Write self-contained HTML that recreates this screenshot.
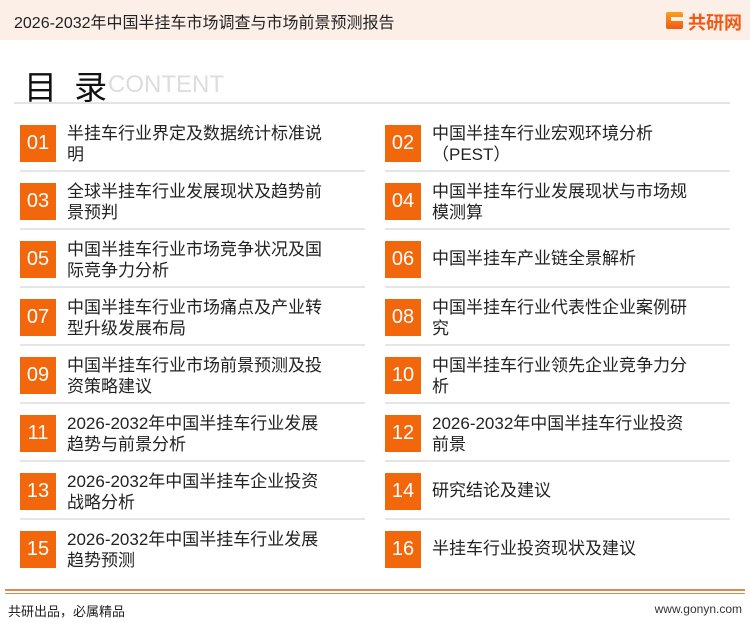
<!DOCTYPE html>
<html><head><meta charset="utf-8"><style>
*{margin:0;padding:0;box-sizing:border-box}
body{width:750px;height:622px;background:#fff;position:relative;overflow:hidden;font-family:"Liberation Sans","Noto Sans CJK SC",sans-serif;color:#222}
.hd{position:absolute;left:0;top:0;width:750px;height:40px;background:#fcefe8}
.ht{position:absolute;left:14px;top:9px;font-size:16px;color:#222}
.logo{position:absolute;left:688px;top:9px;font-size:18px;font-weight:bold;color:#f05a14}
.gi{position:absolute;left:666px;top:12px;width:17px;height:17px;background:linear-gradient(#f7a01e,#f05a14);border-radius:2px}
.gi:after{content:"";position:absolute;left:5px;top:5px;width:12px;height:4px;background:#fcefe8}
.mt{position:absolute;left:24px;top:61px;font-size:33px;color:#111;white-space:nowrap;letter-spacing:4px}
.ct{position:absolute;left:108px;top:71px;font-size:24px;color:#ddd}
.rule{position:absolute;left:14px;top:102px;width:716px;height:2px;background:#e4e4e4}
.it{position:absolute;width:345px;height:46px}
.b{position:absolute;left:0;top:0;width:36px;height:37px;background:#f2660c;color:#fff;font-size:20px;text-align:center;line-height:37px}
.t{position:absolute;left:47px;top:-2px;font-size:17px;line-height:21px;color:#222;white-space:nowrap}
.t1{top:7px}
.ln{position:absolute;width:345px;height:2px;background:#e6e6e6}
.f1{position:absolute;left:5px;top:589px;width:740px;height:2px;background:#d98a55}
.f2{position:absolute;left:5px;top:593px;width:740px;height:1px;background:#d98a55}
.ft{position:absolute;left:8px;top:601px;font-size:13px;color:#222}
.fr{position:absolute;right:8px;top:602px;font-size:12px;color:#333}
</style></head><body>
<div class="hd"></div>
<div class="ht">2026-2032年中国半挂车市场调查与市场前景预测报告</div>
<div class="gi"></div><div class="logo">共研网</div>
<div class="mt">目 录</div><div class="ct">CONTENT</div>
<div class="rule"></div>

<div class="it" style="left:20px;top:125px"><div class="b">01</div><div class="t">半挂车行业界定及数据统计标准说<br>明</div></div>
<div class="it" style="left:385px;top:125px"><div class="b">02</div><div class="t">中国半挂车行业宏观环境分析<br>（PEST）</div></div>
<div class="ln" style="left:20px;top:170px"></div><div class="ln" style="left:385px;top:170px"></div>

<div class="it" style="left:20px;top:183px"><div class="b">03</div><div class="t">全球半挂车行业发展现状及趋势前<br>景预判</div></div>
<div class="it" style="left:385px;top:183px"><div class="b">04</div><div class="t">中国半挂车行业发展现状与市场规<br>模测算</div></div>
<div class="ln" style="left:20px;top:228px"></div><div class="ln" style="left:385px;top:228px"></div>

<div class="it" style="left:20px;top:241px"><div class="b">05</div><div class="t">中国半挂车行业市场竞争状况及国<br>际竞争力分析</div></div>
<div class="it" style="left:385px;top:241px"><div class="b">06</div><div class="t t1">中国半挂车产业链全景解析</div></div>
<div class="ln" style="left:20px;top:286px"></div><div class="ln" style="left:385px;top:286px"></div>

<div class="it" style="left:20px;top:299px"><div class="b">07</div><div class="t">中国半挂车行业市场痛点及产业转<br>型升级发展布局</div></div>
<div class="it" style="left:385px;top:299px"><div class="b">08</div><div class="t">中国半挂车行业代表性企业案例研<br>究</div></div>
<div class="ln" style="left:20px;top:344px"></div><div class="ln" style="left:385px;top:344px"></div>

<div class="it" style="left:20px;top:357px"><div class="b">09</div><div class="t">中国半挂车行业市场前景预测及投<br>资策略建议</div></div>
<div class="it" style="left:385px;top:357px"><div class="b">10</div><div class="t">中国半挂车行业领先企业竞争力分<br>析</div></div>
<div class="ln" style="left:20px;top:402px"></div><div class="ln" style="left:385px;top:402px"></div>

<div class="it" style="left:20px;top:415px"><div class="b">11</div><div class="t">2026-2032年中国半挂车行业发展<br>趋势与前景分析</div></div>
<div class="it" style="left:385px;top:415px"><div class="b">12</div><div class="t">2026-2032年中国半挂车行业投资<br>前景</div></div>
<div class="ln" style="left:20px;top:460px"></div><div class="ln" style="left:385px;top:460px"></div>

<div class="it" style="left:20px;top:473px"><div class="b">13</div><div class="t">2026-2032年中国半挂车企业投资<br>战略分析</div></div>
<div class="it" style="left:385px;top:473px"><div class="b">14</div><div class="t t1">研究结论及建议</div></div>
<div class="ln" style="left:20px;top:518px"></div><div class="ln" style="left:385px;top:518px"></div>

<div class="it" style="left:20px;top:531px"><div class="b">15</div><div class="t">2026-2032年中国半挂车行业发展<br>趋势预测</div></div>
<div class="it" style="left:385px;top:531px"><div class="b">16</div><div class="t t1">半挂车行业投资现状及建议</div></div>

<div class="f1"></div><div class="f2"></div>
<div class="ft">共研出品，必属精品</div>
<div class="fr">www.gonyn.com</div>
</body></html>
